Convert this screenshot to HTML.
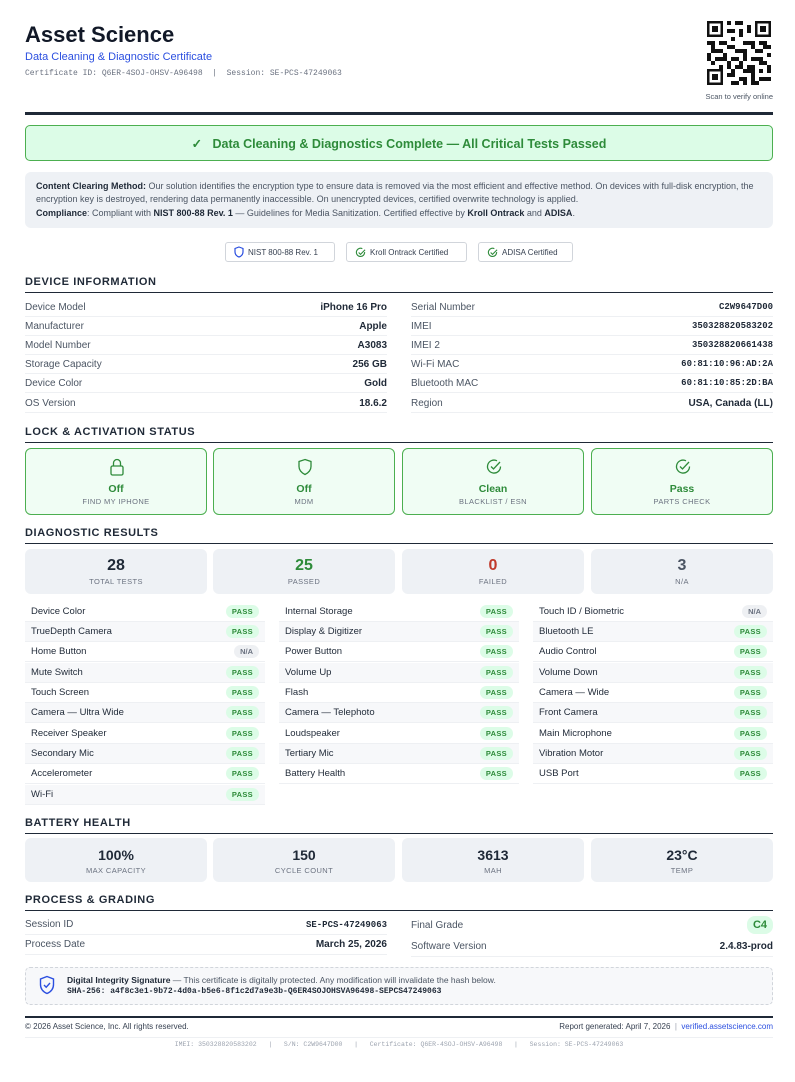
<!DOCTYPE html>
<html><head><meta charset="utf-8"><style>
*{box-sizing:border-box;margin:0;padding:0}
body{width:795px;height:1082px;background:#fff;font-family:"Liberation Sans",sans-serif;color:#1f2937;position:relative;overflow:hidden}
.abs{position:absolute}
.mono{font-family:"Liberation Mono",monospace}
h2{position:absolute;left:25px;width:748px;font-size:11px;font-weight:bold;letter-spacing:.6px;color:#1f2937;border-bottom:1.5px solid #1f2937;padding-bottom:4px}
.row{position:absolute;height:19px;border-bottom:1px solid #eef0f3;font-size:10px;display:flex;justify-content:space-between;align-items:center;color:#4b5563}
.row b{color:#1f2937}
.card{position:absolute;border-radius:6px;text-align:center}
.lk{top:448px;height:67px;width:182px;border:1px solid #4caf50;background:#f0fdf4}
.lk .v{position:absolute;top:34px;width:100%;font-size:10.5px;font-weight:bold;color:#2e8b3a}
.lk .l{position:absolute;top:48px;width:100%;font-size:7.5px;color:#6b7280;letter-spacing:.4px}
.lk svg{position:absolute;top:9px;left:83px}
.st{height:45px;width:182px;background:#eef1f5}
.st .v{position:absolute;top:8px;width:100%;font-size:16px;font-weight:bold}
.st .l{position:absolute;top:28px;width:100%;font-size:7.5px;color:#6b7280;letter-spacing:.4px}
.d{position:absolute;width:240px;height:20px;border-bottom:1px solid #eef0f3;font-size:9.5px;display:flex;justify-content:space-between;align-items:center;padding:0 6px;color:#1f2937}
.d.a{background:#f7f8fa}
.p{background:#dcfce7;color:#2e8b3a;font-weight:bold;font-size:7.5px;border-radius:8px;padding:2px 6px;letter-spacing:.3px}
.n{background:#eef0f3;color:#6b7280;font-weight:bold;font-size:7.5px;border-radius:8px;padding:2px 6px}
.bd{position:absolute;top:242px;height:20px;border:1px solid #d1d5db;border-radius:3px;font-size:8px;display:flex;align-items:center;padding:0 8px;gap:4px;color:#374151}
</style></head><body>
<div class="abs" style="left:25px;top:22px;font-size:22px;font-weight:bold;color:#111827">Asset Science</div>
<div class="abs" style="left:25px;top:51px;font-size:11px;color:#2b4fe0">Data Cleaning &amp; Diagnostic Certificate</div>
<div class="abs mono" style="left:25px;top:69px;font-size:8px;color:#6b7280">Certificate ID: Q6ER-4SOJ-OHSV-A96498 &nbsp;| &nbsp;Session: SE-PCS-47249063</div>
<svg class="abs" style="left:707px;top:20px" width="64" height="66" viewBox="0 0 16 16" shape-rendering="crispEdges">
<rect width="16" height="16" fill="#fff"/>
<g fill="#111">
<path d="M0 0h4v4H0zM12 0h4v4h-4zM0 12h4v4H0z"/>
</g>
<g fill="#fff"><path d="M.6.6h2.8v2.8H.6zM12.6.6h2.8v2.8h-2.8zM.6 12.6h2.8v2.8H.6z"/></g>
<g fill="#111"><path d="M1.2 1.2h1.6v1.6H1.2zM13.2 1.2h1.6v1.6h-1.6zM1.2 13.2h1.6v1.6H1.2z"/>
<path d="M5 0h1v1H5zM7 0h2v1H7zM10 1h1v2h-1zM5 2h2v1H5zM8 2h1v2H8zM6 4h1v1H6zM0 5h2v1H0zM3 5h2v1H3zM9 5h3v1H9zM13 5h2v1h-2zM1 6h1v2H1zM5 6h2v1H5zM11 6h1v1h-1zM14 6h2v1h-2zM2 7h2v1H2zM7 7h3v1H7zM12 7h2v1h-2zM0 8h1v2H0zM4 8h1v1H4zM9 8h1v2H9zM15 8h1v1h-1zM2 9h3v1H2zM6 9h2v1H6zM11 9h3v1h-3zM1 10h1v1H1zM5 10h1v2H5zM8 10h1v1H8zM13 10h2v1h-2zM3 11h1v1H3zM7 11h2v1H7zM10 11h2v1h-2zM15 11h1v2h-1zM6 12h1v2H6zM9 12h3v1H9zM13 12h1v1h-1zM5 13h1v1H5zM8 14h2v1H8zM11 13h1v3h-1zM13 14h3v1h-3zM6 15h2v1H6zM12 15h1v1h-1zM9 15h1v1H9z"/></g></svg>
<div class="abs" style="left:680px;top:92px;width:93px;text-align:right;font-size:7.5px;color:#4b5563">Scan to verify online</div>
<div class="abs" style="left:25px;top:112px;width:748px;height:3px;background:#1f2937"></div>
<div class="abs" style="left:25px;top:125px;width:748px;height:36px;border:1px solid #4caf50;border-radius:5px;background:#dcfce7;display:flex;align-items:center;justify-content:center;color:#2e8b3a;font-size:12.5px;font-weight:bold">✓&nbsp;&nbsp; Data Cleaning &amp; Diagnostics Complete — All Critical Tests Passed</div>
<div class="abs" style="left:25px;top:172px;width:748px;height:56px;background:#eef1f5;border-radius:6px;padding:8px 11px;font-size:9px;line-height:13.3px;color:#4b5563">
<b style="color:#1f2937">Content Clearing Method:</b> Our solution identifies the encryption type to ensure data is removed via the most efficient and effective method. On devices with full-disk encryption, the encryption key is destroyed, rendering data permanently inaccessible. On unencrypted devices, certified overwrite technology is applied.<br><b style="color:#1f2937">Compliance</b>: Compliant with <b style="color:#1f2937">NIST 800-88 Rev. 1</b> — Guidelines for Media Sanitization. Certified effective by <b style="color:#1f2937">Kroll Ontrack</b> and <b style="color:#1f2937">ADISA</b>.</div>
<div class="bd" style="left:225px;width:110px"><svg width="10" height="12" viewBox="0 0 10 12"><path d="M5 1L9 2.5v3.5c0 2.5-2 4.5-4 5-2-.5-4-2.5-4-5V2.5z" fill="none" stroke="#2b4fe0" stroke-width="1.2"/></svg>NIST 800-88 Rev. 1</div>
<div class="bd" style="left:346px;width:121px"><svg width="11" height="11" viewBox="0 0 12 12"><path d="M10.5 5.5A4.5 4.5 0 1 1 8 1.8" fill="none" stroke="#2e8b3a" stroke-width="1.2"/><path d="M4 6l2 2 5-5" fill="none" stroke="#2e8b3a" stroke-width="1.2"/></svg>Kroll Ontrack Certified</div>
<div class="bd" style="left:478px;width:95px"><svg width="11" height="11" viewBox="0 0 12 12"><path d="M10.5 5.5A4.5 4.5 0 1 1 8 1.8" fill="none" stroke="#2e8b3a" stroke-width="1.2"/><path d="M4 6l2 2 5-5" fill="none" stroke="#2e8b3a" stroke-width="1.2"/></svg>ADISA Certified</div>

<h2 style="top:276px">DEVICE INFORMATION</h2>
<div class="row" style="left:25px;width:362px;top:298px"><span>Device Model</span><b>iPhone 16 Pro</b></div>
<div class="row" style="left:25px;width:362px;top:317px"><span>Manufacturer</span><b>Apple</b></div>
<div class="row" style="left:25px;width:362px;top:336px"><span>Model Number</span><b>A3083</b></div>
<div class="row" style="left:25px;width:362px;top:355px"><span>Storage Capacity</span><b>256 GB</b></div>
<div class="row" style="left:25px;width:362px;top:374px"><span>Device Color</span><b>Gold</b></div>
<div class="row" style="left:25px;width:362px;top:394px"><span>OS Version</span><b>18.6.2</b></div>
<div class="row" style="left:411px;width:362px;top:298px"><span>Serial Number</span><b class="mono" style="font-size:9px">C2W9647D00</b></div>
<div class="row" style="left:411px;width:362px;top:317px"><span>IMEI</span><b class="mono" style="font-size:9px">350328820583202</b></div>
<div class="row" style="left:411px;width:362px;top:336px"><span>IMEI 2</span><b class="mono" style="font-size:9px">350328820661438</b></div>
<div class="row" style="left:411px;width:362px;top:355px"><span>Wi-Fi MAC</span><b class="mono" style="font-size:9px">60:81:10:96:AD:2A</b></div>
<div class="row" style="left:411px;width:362px;top:374px"><span>Bluetooth MAC</span><b class="mono" style="font-size:9px">60:81:10:85:2D:BA</b></div>
<div class="row" style="left:411px;width:362px;top:394px"><span>Region</span><b>USA, Canada (LL)</b></div>

<h2 style="top:426px">LOCK &amp; ACTIVATION STATUS</h2>
<div class="card lk" style="left:25px"><svg width="16" height="18" viewBox="0 0 16 18"><rect x="2" y="8" width="12" height="9" rx="1.5" fill="none" stroke="#2e8b3a" stroke-width="1.3"/><path d="M4.5 8V5a3.5 3.5 0 0 1 7 0v3" fill="none" stroke="#2e8b3a" stroke-width="1.3"/></svg><div class="v">Off</div><div class="l">FIND MY IPHONE</div></div>
<div class="card lk" style="left:213px"><svg width="16" height="18" viewBox="0 0 16 18"><path d="M8 1.5L14 3.5v5c0 4-3 6.5-6 8-3-1.5-6-4-6-8v-5z" fill="none" stroke="#2e8b3a" stroke-width="1.3"/></svg><div class="v">Off</div><div class="l">MDM</div></div>
<div class="card lk" style="left:402px"><svg width="16" height="18" viewBox="0 0 16 18"><path d="M14.5 8.5A6.5 6.5 0 1 1 11 2.8" fill="none" stroke="#2e8b3a" stroke-width="1.3"/><path d="M5 8.5l2.5 2.5L14 4" fill="none" stroke="#2e8b3a" stroke-width="1.3"/></svg><div class="v">Clean</div><div class="l">BLACKLIST / ESN</div></div>
<div class="card lk" style="left:591px"><svg width="16" height="18" viewBox="0 0 16 18"><path d="M14.5 8.5A6.5 6.5 0 1 1 11 2.8" fill="none" stroke="#2e8b3a" stroke-width="1.3"/><path d="M5 8.5l2.5 2.5L14 4" fill="none" stroke="#2e8b3a" stroke-width="1.3"/></svg><div class="v">Pass</div><div class="l">PARTS CHECK</div></div>

<h2 style="top:527px">DIAGNOSTIC RESULTS</h2>
<div class="card st" style="left:25px;top:549px"><div class="v">28</div><div class="l">TOTAL TESTS</div></div>
<div class="card st" style="left:213px;top:549px"><div class="v" style="color:#2e8b3a">25</div><div class="l">PASSED</div></div>
<div class="card st" style="left:402px;top:549px"><div class="v" style="color:#c0392b">0</div><div class="l">FAILED</div></div>
<div class="card st" style="left:591px;top:549px"><div class="v" style="color:#4b5563">3</div><div class="l">N/A</div></div>

<div class="d" style="left:25px;top:602px"><span>Device Color</span><span class="p">PASS</span></div>
<div class="d a" style="left:25px;top:622px"><span>TrueDepth Camera</span><span class="p">PASS</span></div>
<div class="d" style="left:25px;top:642px"><span>Home Button</span><span class="n">N/A</span></div>
<div class="d a" style="left:25px;top:663px"><span>Mute Switch</span><span class="p">PASS</span></div>
<div class="d" style="left:25px;top:683px"><span>Touch Screen</span><span class="p">PASS</span></div>
<div class="d a" style="left:25px;top:703px"><span>Camera — Ultra Wide</span><span class="p">PASS</span></div>
<div class="d" style="left:25px;top:724px"><span>Receiver Speaker</span><span class="p">PASS</span></div>
<div class="d a" style="left:25px;top:744px"><span>Secondary Mic</span><span class="p">PASS</span></div>
<div class="d" style="left:25px;top:764px"><span>Accelerometer</span><span class="p">PASS</span></div>
<div class="d a" style="left:25px;top:785px"><span>Wi-Fi</span><span class="p">PASS</span></div>

<div class="d" style="left:279px;top:602px"><span>Internal Storage</span><span class="p">PASS</span></div>
<div class="d a" style="left:279px;top:622px"><span>Display &amp; Digitizer</span><span class="p">PASS</span></div>
<div class="d" style="left:279px;top:642px"><span>Power Button</span><span class="p">PASS</span></div>
<div class="d a" style="left:279px;top:663px"><span>Volume Up</span><span class="p">PASS</span></div>
<div class="d" style="left:279px;top:683px"><span>Flash</span><span class="p">PASS</span></div>
<div class="d a" style="left:279px;top:703px"><span>Camera — Telephoto</span><span class="p">PASS</span></div>
<div class="d" style="left:279px;top:724px"><span>Loudspeaker</span><span class="p">PASS</span></div>
<div class="d a" style="left:279px;top:744px"><span>Tertiary Mic</span><span class="p">PASS</span></div>
<div class="d" style="left:279px;top:764px"><span>Battery Health</span><span class="p">PASS</span></div>

<div class="d" style="left:533px;top:602px"><span>Touch ID / Biometric</span><span class="n">N/A</span></div>
<div class="d a" style="left:533px;top:622px"><span>Bluetooth LE</span><span class="p">PASS</span></div>
<div class="d" style="left:533px;top:642px"><span>Audio Control</span><span class="p">PASS</span></div>
<div class="d a" style="left:533px;top:663px"><span>Volume Down</span><span class="p">PASS</span></div>
<div class="d" style="left:533px;top:683px"><span>Camera — Wide</span><span class="p">PASS</span></div>
<div class="d a" style="left:533px;top:703px"><span>Front Camera</span><span class="p">PASS</span></div>
<div class="d" style="left:533px;top:724px"><span>Main Microphone</span><span class="p">PASS</span></div>
<div class="d a" style="left:533px;top:744px"><span>Vibration Motor</span><span class="p">PASS</span></div>
<div class="d" style="left:533px;top:764px"><span>USB Port</span><span class="p">PASS</span></div>

<h2 style="top:817px">BATTERY HEALTH</h2>
<div class="card st" style="left:25px;top:838px;height:44px"><div class="v" style="font-size:14px;top:9px">100%</div><div class="l">MAX CAPACITY</div></div>
<div class="card st" style="left:213px;top:838px;height:44px"><div class="v" style="font-size:14px;top:9px">150</div><div class="l">CYCLE COUNT</div></div>
<div class="card st" style="left:402px;top:838px;height:44px"><div class="v" style="font-size:14px;top:9px">3613</div><div class="l">MAH</div></div>
<div class="card st" style="left:591px;top:838px;height:44px"><div class="v" style="font-size:14px;top:9px">23°C</div><div class="l">TEMP</div></div>

<h2 style="top:894px">PROCESS &amp; GRADING</h2>
<div class="row" style="left:25px;width:362px;top:915px;height:20px"><span>Session ID</span><b class="mono" style="font-size:9px">SE-PCS-47249063</b></div>
<div class="row" style="left:25px;width:362px;top:935px;height:20px"><span>Process Date</span><b>March 25, 2026</b></div>
<div class="row" style="left:411px;width:362px;top:914px;height:22px;border:none"><span>Final Grade</span><b style="background:#dcfce7;color:#2e8b3a;border-radius:8px;padding:3px 6px;font-size:11px">C4</b></div>
<div class="row" style="left:411px;width:362px;top:936px;height:21px"><span>Software Version</span><b>2.4.83-prod</b></div>

<div class="abs" style="left:25px;top:967px;width:748px;height:38px;border:1px dashed #d1d5db;border-radius:5px;background:#f7f8fa"></div>
<svg class="abs" style="left:39px;top:975px" width="16" height="20" viewBox="0 0 16 20"><path d="M8 1.5L14.5 4v5.5c0 4.5-3 7.5-6.5 9-3.5-1.5-6.5-4.5-6.5-9V4z" fill="none" stroke="#2b4fe0" stroke-width="1.4"/><path d="M5 10l2.2 2.2L11 8" fill="none" stroke="#2b4fe0" stroke-width="1.4"/></svg>
<div class="abs" style="left:67px;top:975px;font-size:8.5px;color:#4b5563"><b style="color:#1f2937">Digital Integrity Signature</b> — This certificate is digitally protected. Any modification will invalidate the hash below.</div>
<div class="abs mono" style="left:67px;top:987px;font-size:8px;font-weight:bold;color:#1f2937">SHA-256: a4f8c3e1-9b72-4d0a-b5e6-8f1c2d7a9e3b-Q6ER4SOJOHSVA96498-SEPCS47249063</div>

<div class="abs" style="left:25px;top:1016px;width:748px;height:1.5px;background:#1f2937"></div>
<div class="abs" style="left:25px;top:1022px;font-size:8px;color:#374151">© 2026 Asset Science, Inc. All rights reserved.</div>
<div class="abs" style="left:400px;top:1022px;width:373px;text-align:right;font-size:8px;color:#374151">Report generated: April 7, 2026 &nbsp;<span style="color:#9ca3af">|</span>&nbsp; <span style="color:#2b4fe0">verified.assetscience.com</span></div>
<div class="abs" style="left:25px;top:1037px;width:748px;height:1px;background:#eef0f3"></div>
<div class="abs mono" style="left:25px;top:1041px;width:748px;text-align:center;font-size:6.5px;color:#9ca3af">IMEI: 350328820583202 &nbsp;&nbsp;| &nbsp;&nbsp;S/N: C2W9647D00 &nbsp;&nbsp;| &nbsp;&nbsp;Certificate: Q6ER-4SOJ-OHSV-A96498 &nbsp;&nbsp;| &nbsp;&nbsp;Session: SE-PCS-47249063</div>
</body></html>
